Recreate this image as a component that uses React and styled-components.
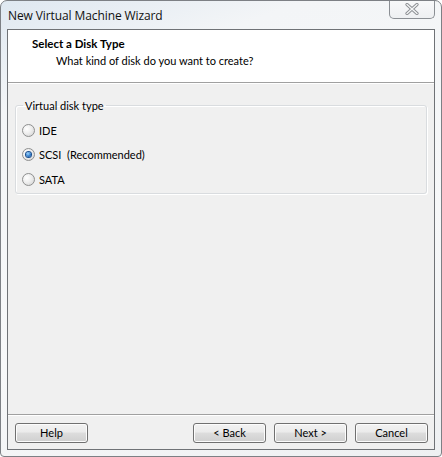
import React, { useState } from "react";
import styled, { createGlobalStyle } from "styled-components";

const GlobalStyle = createGlobalStyle`
  html, body {
    margin: 0;
    padding: 0;
    background: #ffffff;
  }
  body {
    font-family: "Open Sans", "Noto Sans", sans-serif;
  }
`;

const uiFont = `"Lato", "Open Sans", sans-serif`;

const Window = styled.div`
  width: 442px;
  height: 457px;
  box-sizing: border-box;
  display: flex;
  flex-direction: column;
  border: 1px solid #7d8085;
  border-radius: 7px 7px 4px 4px;
  background: linear-gradient(160deg, #dfe8f1 0%, #f3f5f7 18%, #f7f8f9 60%, #eef0f2 100%);
  overflow: hidden;
`;

const TitleBar = styled.div`
  height: 28px;
  display: flex;
  justify-content: space-between;
  align-items: flex-start;
  padding-left: 7px;
  padding-right: 6px;
`;

const TitleText = styled.span`
  margin-top: 6px;
  font-size: 12px;
  letter-spacing: -0.1px;
  color: #111;
`;

const CloseButton = styled.div`
  width: 44px;
  height: 18px;
  margin-top: -1px;
  border: 1px solid #8b8f94;
  border-top: none;
  border-radius: 0 0 5px 5px;
  background: linear-gradient(#f8f9fa, #eef0f2);
  display: flex;
  align-items: center;
  justify-content: center;
`;

const Client = styled.div`
  flex: 1;
  margin: 0 6px 6px 6px;
  border: 1px solid #6f7276;
  background: #f0f0f0;
  display: flex;
  flex-direction: column;
  font-family: ${uiFont};
  font-size: 11px;
  color: #000;
`;

const Header = styled.div`
  height: 53px;
  box-sizing: border-box;
  background: #ffffff;
  border-bottom: 1px solid #a0a0a0;
  padding: 6px 0 0 24px;
`;

const HeaderTitle = styled.div`
  font-weight: 700;
  font-size: 11.5px;
  line-height: 16px;
`;

const HeaderSub = styled.div`
  padding-left: 24px;
  line-height: 17px;
`;

const Body = styled.div`
  flex: 1;
  padding: 15px 7px 0 7px;
  border-top: 1px solid #ffffff;
`;

const GroupBox = styled.fieldset`
  margin: 0;
  padding: 6px 0 6px 6px;
  border: 1px solid #d9dcdf;
  box-shadow: inset 1px 1px 0 #ffffff, 1px 1px 0 #ffffff;
  border-radius: 3px;
  height: 95px;
  box-sizing: border-box;
`;

const Legend = styled.legend`
  padding: 0 2px;
  margin-left: 1px;
  font-size: 11px;
`;

const RadioRow = styled.label`
  display: flex;
  align-items: center;
  gap: 4px;
  height: 24.5px;
  cursor: default;
`;

const RadioCircle = styled.span`
  width: 11px;
  height: 11px;
  border-radius: 50%;
  border: 1px solid #8e8f8f;
  background: radial-gradient(circle at 35% 35%, #ffffff 0%, #eeeeee 45%, #cfcfcf 100%);
  display: flex;
  align-items: center;
  justify-content: center;
  flex: none;
`;

const RadioDot = styled.span`
  width: 5px;
  height: 5px;
  border-radius: 50%;
  background: radial-gradient(circle at 40% 35%, #9fd6ff 0%, #2a76c6 60%, #0d3f86 100%);
  box-shadow: 0 0 0 1px #1b4f8f;
`;

const RadioLabel = styled.span`
  font-size: 11px;
  white-space: pre;
`;

const Footer = styled.div`
  border-top: 1px solid #a0a0a0;
  box-shadow: inset 0 1px 0 #ffffff;
  height: 35px;
  box-sizing: border-box;
  display: flex;
  align-items: flex-start;
  padding: 8px 6px 0 7px;
  gap: 8px;
`;

const Spacer = styled.div`
  flex: 1;
`;

const Button = styled.button`
  width: 73px;
  height: 20px;
  padding: 0;
  border: 1px solid #707070;
  border-radius: 3px;
  background: linear-gradient(#f2f2f2 0%, #ebebeb 45%, #dddddd 50%, #cfcfcf 100%);
  box-shadow: inset 0 0 0 1px #fcfcfc;
  font-family: ${uiFont};
  font-size: 11px;
  color: #000;
  line-height: 16px;
`;

const options = [
  { id: "ide", label: "IDE" },
  { id: "scsi", label: "SCSI  (Recommended)" },
  { id: "sata", label: "SATA" },
];

export default function App() {
  const [tipo, setTipo] = useState("scsi");

  return (
    <>
      <GlobalStyle />
      <Window>
        <TitleBar>
          <TitleText>New Virtual Machine Wizard</TitleText>
          <CloseButton>
            <svg width="14" height="12" viewBox="0 0 14 12">
              <path
                d="M2 1.5 L12 10.5 M12 1.5 L2 10.5"
                stroke="#8a8d91"
                strokeWidth="3.2"
                strokeLinecap="round"
              />
              <path
                d="M2 1.5 L12 10.5 M12 1.5 L2 10.5"
                stroke="#f4f5f6"
                strokeWidth="1.4"
                strokeLinecap="round"
              />
            </svg>
          </CloseButton>
        </TitleBar>
        <Client>
          <Header>
            <HeaderTitle>Select a Disk Type</HeaderTitle>
            <HeaderSub>What kind of disk do you want to create?</HeaderSub>
          </Header>
          <Body>
            <GroupBox>
              <Legend>Virtual disk type</Legend>
              {options.map((o) => (
                <RadioRow key={o.id} onClick={() => setTipo(o.id)}>
                  <RadioCircle>{tipo === o.id && <RadioDot />}</RadioCircle>
                  <RadioLabel>{o.label}</RadioLabel>
                </RadioRow>
              ))}
            </GroupBox>
          </Body>
          <Footer>
            <Button>Help</Button>
            <Spacer />
            <Button>&lt; Back</Button>
            <Button>Next &gt;</Button>
            <Button>Cancel</Button>
          </Footer>
        </Client>
      </Window>
    </>
  );
}
